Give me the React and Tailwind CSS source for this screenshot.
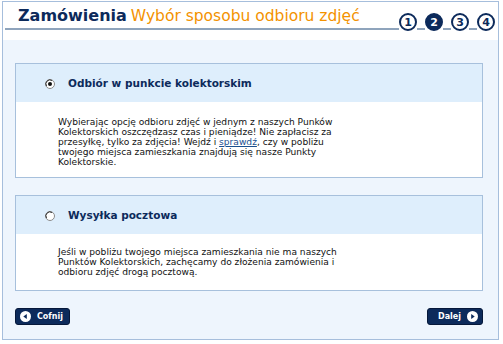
import React from 'react';

const NAVY = 'text-[#0c2a5b]';

const StepCircle = ({ n, active }) => (
    <div
        className={`w-[18px] h-[18px] rounded-full border-2 border-[#0c2a5b] flex items-center justify-center text-[11px] font-bold leading-none ${
            active ? 'bg-[#0c2a5b] text-white' : 'bg-white text-[#0c2a5b]'
        }`}
    >
        {n}
    </div>
);

const Connector = () => <div className="w-[8px] h-[2px] mt-[15px] bg-[#8fa4bc]" />;

const Radio = ({ checked }) => (
    <svg width="10" height="10" viewBox="0 0 10 10" className="shrink-0">
        <circle cx="5" cy="5" r="4.5" fill="#ffffff" stroke="#8a8a8a" />
        <path d="M1.5 7 A4 4 0 0 1 7 1.5" fill="none" stroke="#333" strokeWidth="1" />
        {checked && <circle cx="5" cy="5" r="2" fill="#111" />}
    </svg>
);

const ArrowIcon = ({ dir }) => (
    <svg width="11" height="11" viewBox="0 0 11 11" className="shrink-0">
        <circle cx="5.5" cy="5.5" r="5.5" fill="#ffffff" />
        {dir === 'left' ? (
            <path d="M3.3 5.5 L6.8 3 L6.8 8 Z" fill="#0c2a5b" />
        ) : (
            <path d="M7.7 5.5 L4.2 3 L4.2 8 Z" fill="#0c2a5b" />
        )}
    </svg>
);

const Panel = ({ title, checked, children, bodyClass }) => (
    <div className="border border-[#a7c0dc] bg-white">
        <div className="h-[38px] bg-[#deeefc] flex items-center gap-[13px] pl-[29px] pt-[1px]">
            <Radio checked={checked} />
            <span className={`text-[10.5px] font-bold ${NAVY}`}>{title}</span>
        </div>
        <div className={`pl-[42px] pr-4 text-[9.1px] leading-[10px] text-[#111] ${bodyClass}`}>{children}</div>
    </div>
);

const App = () => {
    return (
        <div className="w-[503px] h-[344px] bg-white pt-[1px] pl-[2px]" style={{ fontFamily: '"DejaVu Sans", Verdana, sans-serif' }}>
            <div className="w-[497px] h-[339px] border border-[#a6bedc] flex flex-col">
                <div className="h-[38px] bg-white flex pl-[2px] pr-[3px]">
                    <div className="flex-1 h-[28px] border-b-2 border-[#8fa4bc] flex items-end pl-[13px] pb-[4px] whitespace-nowrap">
                        <span className={`text-[16px] font-bold leading-none ${NAVY}`}>Zamówienia</span>
                        <span className="text-[15.5px] leading-none text-[#f39200] ml-[4px]">Wybór sposobu odbioru zdjęć</span>
                    </div>
                    <div className="flex items-start pt-[11px]">
                        <StepCircle n="1" />
                        <Connector />
                        <StepCircle n="2" active />
                        <Connector />
                        <StepCircle n="3" />
                        <Connector />
                        <StepCircle n="4" />
                    </div>
                </div>

                <div className="flex-1 bg-[#eef5fd] pt-[23px] pl-[12px] pr-[15px] flex flex-col">
                    <Panel title="Odbiór w punkcie kolektorskim" checked bodyClass="pt-[15px] h-[75px]">
                        Wybierając opcję odbioru zdjęć w jednym z naszych Punków
                        <br />
                        Kolektorskich oszczędzasz czas i pieniądze! Nie zapłacisz za
                        <br />
                        przesyłkę, tylko za zdjęcia! Wejdź i{' '}
                        <a href="#" className="text-[#1a4f8f] underline">
                            sprawdź
                        </a>
                        , czy w pobliżu
                        <br />
                        twojego miejsca zamieszkania znajdują się nasze Punkty
                        <br />
                        Kolektorskie.
                    </Panel>

                    <div className="mt-[17px]">
                        <Panel title="Wysyłka pocztowa" bodyClass="pt-[13px] h-[56px]">
                            Jeśli w pobliżu twojego miejsca zamieszkania nie ma naszych
                            <br />
                            Punktów Kolektorskich, zachęcamy do złożenia zamówienia i
                            <br />
                            odbioru zdjęć drogą pocztową.
                        </Panel>
                    </div>

                    <div className="mt-[17px] flex justify-between">
                        <button className="w-[55px] h-[17px] rounded-[3px] bg-[#0c2a5b] border border-[#06183a] flex items-center gap-[6px] pl-[4px] text-white text-[8px] font-bold">
                            <ArrowIcon dir="left" />
                            Cofnij
                        </button>
                        <button className="w-[56px] h-[17px] rounded-[3px] bg-[#0c2a5b] border border-[#06183a] flex items-center justify-end gap-[6px] pr-[4px] text-white text-[8px] font-bold">
                            Dalej
                            <ArrowIcon dir="right" />
                        </button>
                    </div>
                </div>
            </div>
        </div>
    );
};

export default App;
